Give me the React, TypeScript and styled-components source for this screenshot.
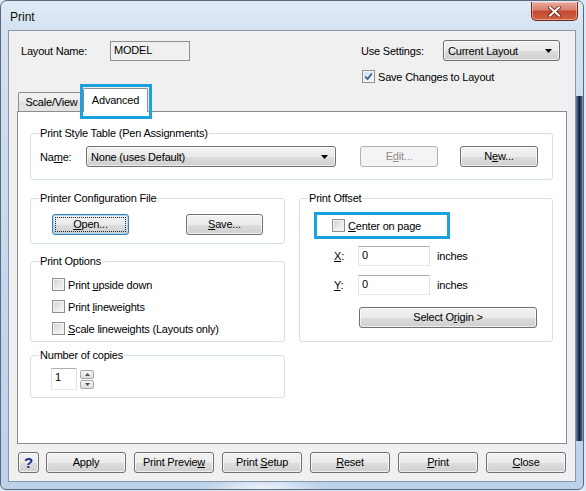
import React from "react";
import styled, { createGlobalStyle, css } from "styled-components";

const GlobalStyle = createGlobalStyle`
  html, body { margin: 0; padding: 0; }
  body {
    background: #dbe7f3;
    font-family: "Liberation Sans", Arial, sans-serif;
    font-size: 11px;
    letter-spacing: -0.2px;
    color: #000;
  }
  u { text-decoration-thickness: 1px; text-underline-offset: 1px; }
`;

const Frame = styled.div`
  width: 584px;
  height: 490px;
  box-sizing: border-box;
  border: 1px solid #5a6a7e;
  border-radius: 7px 7px 6px 6px;
  display: flex;
  flex-direction: column;
  overflow: hidden;
  background:
    linear-gradient(to right, #6f87a8, #15213a 45%, #3b5175 80%, #9db3cf) right 0 top 95px / 7px 345px no-repeat,
    radial-gradient(ellipse 60px 12px at 45% 100%, rgba(255, 255, 255, 0.8), transparent) left 0 bottom 0 / 100% 8px no-repeat,
    radial-gradient(ellipse 110px 28px at 72% 30%, rgba(214, 200, 160, 0.55), transparent),
    linear-gradient(to bottom, #e1ebf6 0px, #d3e1f1 30px, #c4d7ec 60%, #bdd2ea 100%);
`;

const TitleBar = styled.div`
  height: 29px;
  display: flex;
  justify-content: space-between;
  align-items: flex-start;
  flex-shrink: 0;
`;

const Title = styled.div`
  padding: 9px 0 0 9px;
  font-size: 12px;
  letter-spacing: 0;
  color: #111;
`;

const CloseBtn = styled.div`
  width: 47px;
  height: 19px;
  margin: 1px 5px 0 0;
  box-sizing: border-box;
  border: 1px solid #6b2a20;
  border-top: none;
  border-radius: 0 0 5px 5px;
  background: linear-gradient(to bottom, #e9a99a 0%, #d9806c 45%, #c34a2f 50%, #cf5f3f 100%);
  box-shadow: inset 0 0 0 1px rgba(255, 220, 210, 0.5);
  display: flex;
  align-items: center;
  justify-content: center;
`;

const Client = styled.div`
  flex: 1;
  margin: 0 7px 7px 7px;
  border: 1px solid #8898ad;
  background: #f0f0f0;
  display: flex;
  flex-direction: column;
  padding-bottom: 8px;
`;

const TopSection = styled.div`
  display: flex;
  justify-content: space-between;
  align-items: flex-start;
  padding: 9px 15px 0 12px;
`;

const FieldRow = styled.div<{ $mt?: number; $ml?: number }>`
  display: flex;
  align-items: center;
  margin-top: ${(p) => p.$mt ?? 0}px;
  margin-left: ${(p) => p.$ml ?? 0}px;
`;

const RightStack = styled.div`
  display: flex;
  flex-direction: column;
  gap: 9px;
`;

const Label = styled.span<{ $w?: number }>`
  display: inline-block;
  width: ${(p) => (p.$w ? `${p.$w}px` : "auto")};
  white-space: nowrap;
`;

const ReadOnlyBox = styled.div`
  width: 80px;
  height: 20px;
  margin-top: 1px;
  box-sizing: border-box;
  border: 1px solid #8f8f8f;
  background: #f0f0f0;
  padding: 2px 0 0 3px;
`;

const Combo = styled.div<{ $w: number }>`
  width: ${(p) => p.$w}px;
  height: 21px;
  box-sizing: border-box;
  border: 1px solid #707070;
  border-radius: 3px;
  background: linear-gradient(to bottom, #f2f2f2 0%, #ebebeb 50%, #dddddd 51%, #cfcfcf 100%);
  box-shadow: inset 0 0 0 1px rgba(255, 255, 255, 0.6);
  display: flex;
  align-items: center;
  justify-content: space-between;
  padding: 0 7px 0 4px;
`;

const CheckRow = styled.label<{ $ml?: number }>`
  display: flex;
  align-items: center;
  gap: 3px;
  height: 13px;
  margin-left: ${(p) => p.$ml ?? 0}px;
  white-space: nowrap;
`;

const CheckBox = styled.span`
  width: 13px;
  height: 13px;
  box-sizing: border-box;
  border: 1px solid #8e8f8f;
  background: linear-gradient(135deg, #d0d0d0 0%, #ebebeb 60%, #f8f8f8 100%);
  box-shadow: inset 0 0 0 1px #f4f4f4;
  display: flex;
  align-items: center;
  justify-content: center;
  flex-shrink: 0;
`;

const CheckedBox = styled(CheckBox)`
  background: linear-gradient(135deg, #cddbee 0%, #e7eef8 60%, #f6f9fd 100%);
`;

const TabStrip = styled.div`
  display: flex;
  align-items: flex-end;
  height: 23px;
  margin-top: 5px;
  padding-left: 9px;
  position: relative;
  z-index: 2;
`;

const Tab = styled.div<{ $active?: boolean }>`
  position: relative;
  box-sizing: border-box;
  border: 1px solid #898c95;
  border-bottom: none;
  border-radius: 2px 2px 0 0;
  display: flex;
  align-items: center;
  justify-content: center;
  white-space: nowrap;
  ${(p) =>
    p.$active
      ? css`
          width: 65px;
          height: 24px;
          margin-bottom: -1px;
          margin-left: -2px;
          padding-bottom: 2px;
          background: #ffffff;
        `
      : css`
          width: 67px;
          height: 19px;
          background: linear-gradient(to bottom, #f3f3f3 0%, #ebebeb 50%, #dedede 51%, #e4e4e4 100%);
        `}
`;

const Highlight = styled.span`
  position: absolute;
  top: -5px;
  left: -4px;
  right: -5px;
  bottom: -7px;
  border: 3px solid #1ba1e0;
  pointer-events: none;
`;

const Panel = styled.div`
  margin: 0 8px;
  height: 333px;
  box-sizing: border-box;
  border: 1px solid #898c95;
  background: #ffffff;
  padding: 15px 13px 0 12px;
`;

const Group = styled.fieldset<{ $h: number; $mt?: number }>`
  margin: ${(p) => p.$mt ?? 0}px 0 0 0;
  padding: 0 12px 0 9px;
  height: ${(p) => p.$h}px;
  box-sizing: border-box;
  border: 1px solid #d5dfe5;
  border-radius: 3px;
  min-width: 0;
`;

const Legend = styled.legend`
  padding: 0 1px;
  margin-left: -1px;
  line-height: 13px;
`;

const Columns = styled.div`
  display: grid;
  grid-template-columns: 255px 254px;
  column-gap: 14px;
  margin-top: 12px;
`;

const Column = styled.div`
  display: flex;
  flex-direction: column;
`;

const CheckList = styled.div`
  display: flex;
  flex-direction: column;
  gap: 9px;
  margin: 10px 0 0 12px;
`;

const Btn = styled.div<{ $w: number; $ml?: number; $disabled?: boolean; $default?: boolean }>`
  width: ${(p) => p.$w}px;
  height: 21px;
  margin-left: ${(p) => p.$ml ?? 0}px;
  box-sizing: border-box;
  border: 1px solid #707070;
  border-radius: 3px;
  background: linear-gradient(to bottom, #f2f2f2 0%, #ebebeb 50%, #dddddd 51%, #cfcfcf 100%);
  box-shadow: inset 0 0 0 1px rgba(255, 255, 255, 0.65);
  display: block;
  text-align: center;
  line-height: 19px;
  white-space: nowrap;
  flex-shrink: 0;
  ${(p) =>
    p.$disabled &&
    css`
      border-color: #adb2b5;
      background: #f4f4f4;
      box-shadow: none;
      color: #8d8d8d;
    `}
  ${(p) =>
    p.$default &&
    css`
      border-color: #3c7fb1;
      box-shadow: inset 0 0 0 1px #a6d9f4;
      padding: 2px;
    `}
`;

const FocusRect = styled.span`
  display: block;
  height: 15px;
  line-height: 13px;
  box-sizing: border-box;
  border: 1px dotted #222;
`;

const TextInput = styled.div<{ $w: number; $h: number }>`
  width: ${(p) => p.$w}px;
  height: ${(p) => p.$h}px;
  box-sizing: border-box;
  background: #fff;
  border: 1px solid #e2e3ea;
  border-top-color: #abadb3;
  border-bottom-color: #e3e9ef;
  padding: 2px 0 0 3px;
`;

const Spinner = styled.div`
  display: flex;
  flex-direction: column;
  gap: 1px;
  margin-left: 3px;
`;

const SpinBtn = styled.div`
  width: 14px;
  height: 9px;
  box-sizing: border-box;
  border: 1px solid #a9a9a9;
  border-radius: 2px;
  background: linear-gradient(to bottom, #f6f6f6, #dcdcdc);
  display: flex;
  align-items: center;
  justify-content: center;
`;

const HighlightBox = styled.div`
  width: 136px;
  height: 27px;
  box-sizing: border-box;
  border: 3px solid #1ba1e0;
  margin: 7px 0 0 5px;
  padding-left: 15px;
  display: flex;
  align-items: center;
`;

const Suffix = styled.span`
  margin-left: 7px;
`;

const ButtonBar = styled.div`
  display: flex;
  align-items: center;
  margin-top: 8px;
  padding-left: 9px;
`;

const HelpMark = styled.span`
  font-weight: bold;
  font-size: 15px;
  color: #1c2f8f;
  letter-spacing: 0;
`;

const Arrow = () => (
  <svg width="7" height="4" viewBox="0 0 7 4">
    <path d="M0 0h7L3.5 4z" fill="#000" />
  </svg>
);

const SpinArrow = ({ up }: { up?: boolean }) => (
  <svg width="5" height="3" viewBox="0 0 5 3">
    <path d={up ? "M0 3h5L2.5 0z" : "M0 0h5L2.5 3z"} fill="#4d4d4d" />
  </svg>
);

const Check = ({ checked }: { checked?: boolean }) =>
  checked ? (
    <CheckedBox>
      <svg width="9" height="9" viewBox="0 0 9 9">
        <path d="M1.2 4.6 L3.6 7 L7.9 1.4" fill="none" stroke="#41578c" strokeWidth="1.7" />
      </svg>
    </CheckedBox>
  ) : (
    <CheckBox />
  );

export default function App() {
  return (
    <>
      <GlobalStyle />
      <Frame>
        <TitleBar>
          <Title>Print</Title>
          <CloseBtn>
            <svg width="13" height="11" viewBox="0 0 13 11">
              <path d="M2 1.5 L11 9.5 M11 1.5 L2 9.5" stroke="#5e1d12" strokeWidth="3.6" strokeLinecap="square" />
              <path d="M2 1.5 L11 9.5 M11 1.5 L2 9.5" stroke="#ffffff" strokeWidth="2" strokeLinecap="square" />
            </svg>
          </CloseBtn>
        </TitleBar>
        <Client>
          <TopSection>
            <FieldRow>
              <Label $w={89}>Layout Name:</Label>
              <ReadOnlyBox>MODEL</ReadOnlyBox>
            </FieldRow>
            <RightStack>
              <FieldRow>
                <Label $w={82}>Use Settings:</Label>
                <Combo $w={117}>
                  Current Layout
                  <Arrow />
                </Combo>
              </FieldRow>
              <CheckRow $ml={1}>
                <Check checked />
                <span>Save Changes to Layout</span>
              </CheckRow>
            </RightStack>
          </TopSection>

          <TabStrip>
            <Tab>Scale/View</Tab>
            <Tab $active>
              Advanced
              <Highlight />
            </Tab>
          </TabStrip>

          <Panel>
            <Group $h={53}>
              <Legend>Print Style Table (Pen Assignments)</Legend>
              <FieldRow $mt={6}>
                <Label $w={46}>
                  Na<u>m</u>e:
                </Label>
                <Combo $w={250}>
                  None (uses Default)
                  <Arrow />
                </Combo>
                <Btn $w={78} $ml={24} $disabled>
                  E<u>d</u>it...
                </Btn>
                <Btn $w={78} $ml={22}>
                  N<u>e</u>w...
                </Btn>
              </FieldRow>
            </Group>

            <Columns>
              <Column>
                <Group $h={52}>
                  <Legend>Printer Configuration File</Legend>
                  <FieldRow $mt={9}>
                    <Btn $w={77} $ml={12} $default>
                      <FocusRect>
                        <u>O</u>pen...
                      </FocusRect>
                    </Btn>
                    <Btn $w={77} $ml={57}>
                      <u>S</u>ave...
                    </Btn>
                  </FieldRow>
                </Group>

                <Group $h={87} $mt={11}>
                  <Legend>Print Options</Legend>
                  <CheckList>
                    <CheckRow>
                      <Check />
                      <span>
                        Print <u>u</u>pside down
                      </span>
                    </CheckRow>
                    <CheckRow>
                      <Check />
                      <span>
                        Print <u>l</u>ineweights
                      </span>
                    </CheckRow>
                    <CheckRow>
                      <Check />
                      <span>
                        <u>S</u>cale lineweights (Layouts only)
                      </span>
                    </CheckRow>
                  </CheckList>
                </Group>

                <Group $h={49} $mt={7}>
                  <Legend>Number of copies</Legend>
                  <FieldRow $mt={6} $ml={11}>
                    <TextInput $w={26} $h={22}>1</TextInput>
                    <Spinner>
                      <SpinBtn>
                        <SpinArrow up />
                      </SpinBtn>
                      <SpinBtn>
                        <SpinArrow />
                      </SpinBtn>
                    </Spinner>
                  </FieldRow>
                </Group>
              </Column>

              <Column>
                <Group $h={150}>
                  <Legend>Print Offset</Legend>
                  <HighlightBox>
                    <CheckRow>
                      <Check />
                      <span>
                        <u>C</u>enter on page
                      </span>
                    </CheckRow>
                  </HighlightBox>
                  <FieldRow $mt={7} $ml={25}>
                    <Label $w={24}>
                      <u>X</u>:
                    </Label>
                    <TextInput $w={72} $h={20}>0</TextInput>
                    <Suffix>inches</Suffix>
                  </FieldRow>
                  <FieldRow $mt={9} $ml={25}>
                    <Label $w={24}>
                      <u>Y</u>:
                    </Label>
                    <TextInput $w={72} $h={20}>0</TextInput>
                    <Suffix>inches</Suffix>
                  </FieldRow>
                  <FieldRow $mt={12}>
                    <Btn $w={178} $ml={50}>
                      Select O<u>r</u>igin &gt;
                    </Btn>
                  </FieldRow>
                </Group>
              </Column>
            </Columns>
          </Panel>

          <ButtonBar>
            <Btn $w={21}>
              <HelpMark>?</HelpMark>
            </Btn>
            <Btn $w={80} $ml={7}>Apply</Btn>
            <Btn $w={80} $ml={8}>
              Print Previe<u>w</u>
            </Btn>
            <Btn $w={80} $ml={8}>
              Print <u>S</u>etup
            </Btn>
            <Btn $w={80} $ml={8}>
              <u>R</u>eset
            </Btn>
            <Btn $w={80} $ml={8}>
              <u>P</u>rint
            </Btn>
            <Btn $w={80} $ml={8}>
              <u>C</u>lose
            </Btn>
          </ButtonBar>
        </Client>
      </Frame>
    </>
  );
}
